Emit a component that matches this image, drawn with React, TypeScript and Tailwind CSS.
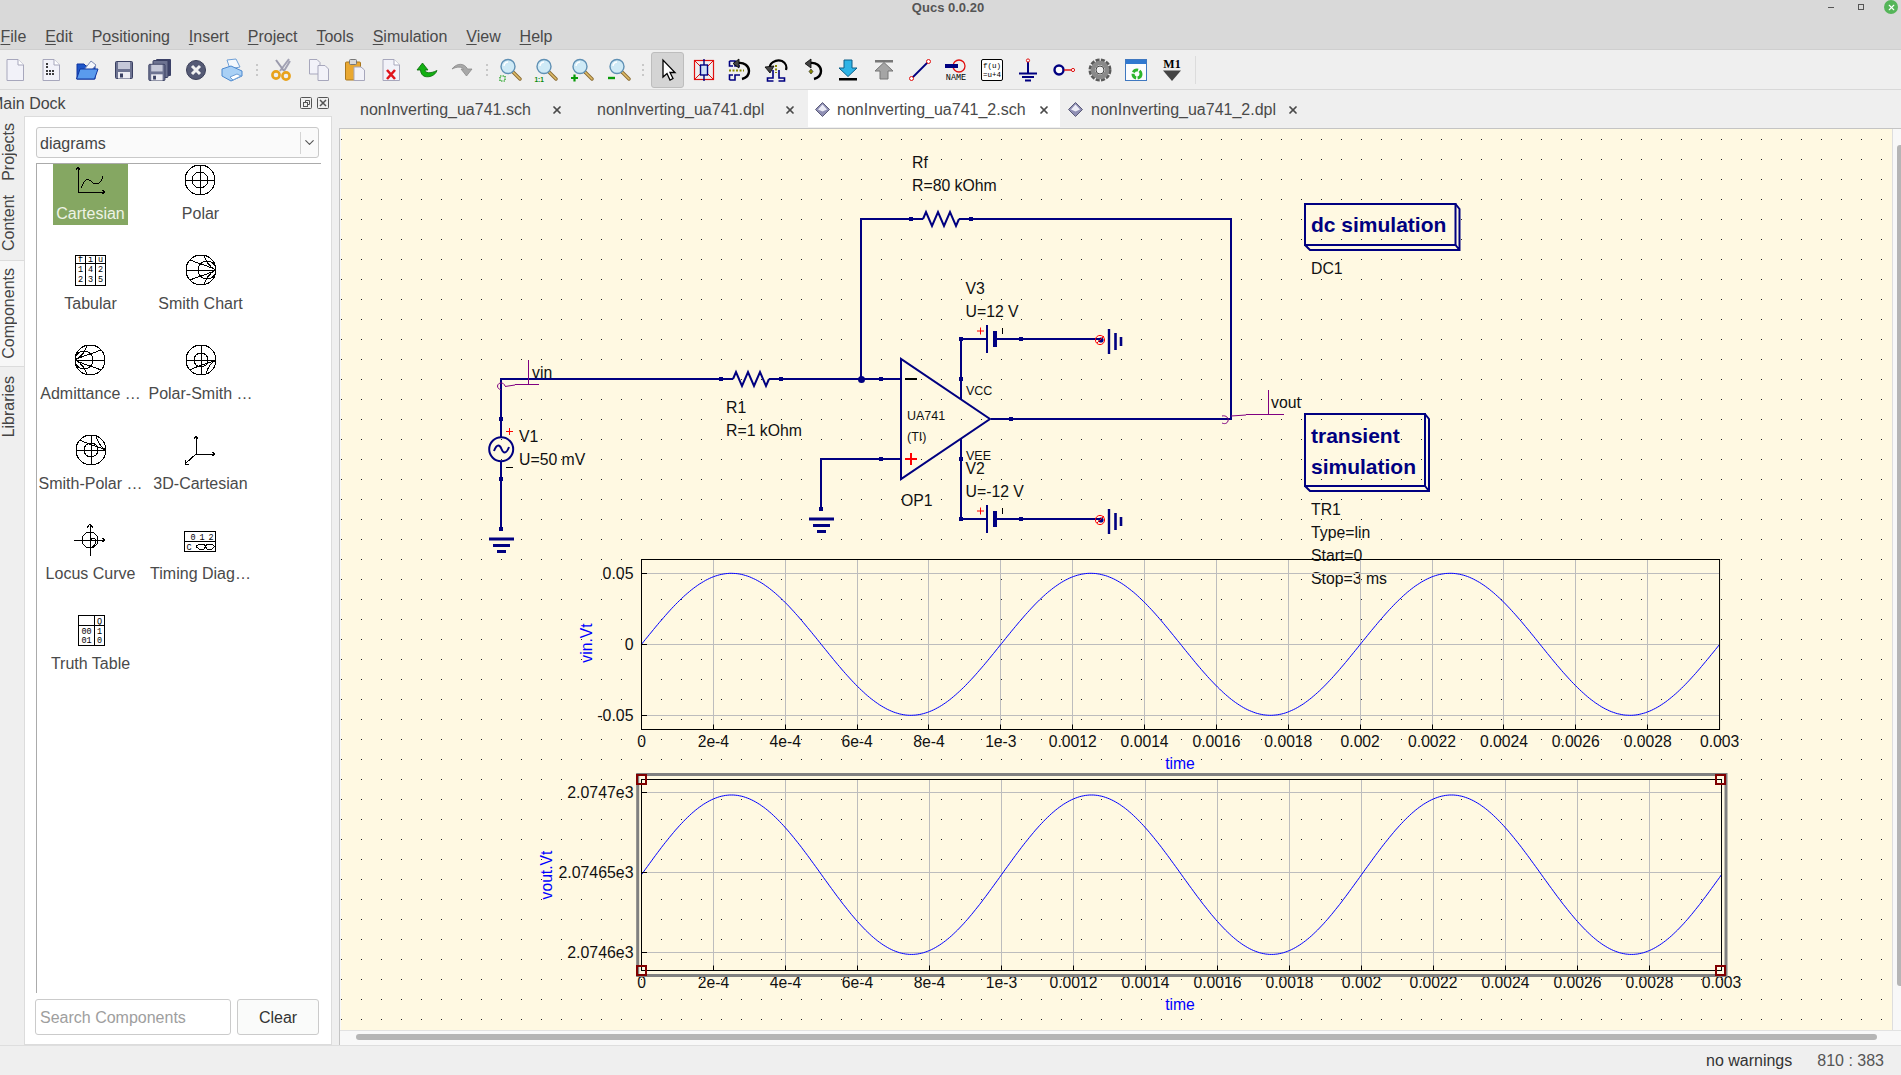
import React from 'react';
import { ChevronDown, X } from 'lucide-react';

const NAVY = '#000080';

const wave = (x0: number, x1: number, cy: number, amp: number, period: number) => {
  let d = '';
  for (let x = x0; x <= x1; x += 2) {
    const y = cy - amp * Math.sin(((x - x0) * 2 * Math.PI) / period);
    d += `${d ? 'L' : 'M'}${x.toFixed(1)} ${y.toFixed(1)}`;
  }
  return d;
};

const Ico: React.FC<{ children: React.ReactNode }> = ({ children }) => (
  <svg width="24" height="24" viewBox="0 0 24 24">
    {children}
  </svg>
);

const Page: React.FC<{ children?: React.ReactNode }> = ({ children }) => (
  <Ico>
    <path d="M4 1.5H15L20.5 7V22.5H4Z" fill="#f2f2f9" stroke="#a7a7bc" />
    <path d="M15 1.5V7H20.5" fill="#fff" stroke="#a7a7bc" />
    {children}
  </Ico>
);

const Floppy: React.FC<{ x?: number; y?: number; s?: number }> = ({ x = 0, y = 0, s = 1 }) => (
  <g transform={`translate(${x} ${y}) scale(${s})`}>
    <rect x="3.5" y="3.5" width="17" height="17" rx="1" fill="#6d7391" stroke="#3a4062" />
    <rect x="6" y="4" width="12" height="7" fill="#c5c8d8" />
    <rect x="6" y="14" width="12" height="6.5" fill="#ececf2" />
    <rect x="8" y="15.5" width="3" height="4" fill="#3a4062" />
  </g>
);

const Lens: React.FC<{ children: React.ReactNode }> = ({ children }) => (
  <Ico>
    <path d="M15 14L22 21" stroke="#8a6a30" strokeWidth="3.4" strokeLinecap="round" />
    <path d="M15 14L22 21" stroke="#e0bd6a" strokeWidth="1.6" strokeLinecap="round" />
    <circle cx="10" cy="8.5" r="7" fill="#cfeaf6" stroke="#5f90b4" strokeWidth="1.4" />
    <path d="M6 8a4.5 4.5 0 0 1 4-4" stroke="#fff" strokeWidth="1.4" fill="none" />
    {children}
  </Ico>
);

const BigArrow: React.FC<{ fill: string; edge: string; up?: boolean }> = ({ fill, edge, up }) => (
  <Ico>
    {up ? (
      <>
        <rect x="3" y="2" width="18" height="2.5" fill="#777" />
        <path d="M12 4.5L21 13H16V21H8V13H3Z" fill={fill} stroke={edge} />
      </>
    ) : (
      <>
        <path d="M8 2H16V10H21L12 18.5L3 10H8Z" fill={fill} stroke={edge} />
        <rect x="3" y="20" width="18" height="2.5" fill="#000" />
      </>
    )}
  </Ico>
);

const CurlArrow: React.FC = () => (
  <g>
    <path d="M10 5C16 4 21 8 21 13C21 17 18 20 14 21" fill="none" stroke="#000" strokeWidth="2.4" />
    <path d="M11 1L5 5.5L11 10Z" fill="#444" stroke="#000" strokeWidth="0.8" />
  </g>
);

const toolbarGroups: React.ReactNode[][] = [
  [
    <Page />,
    <Page>
      <path d="M7 6h2M7 9h3M7 13h8M7 16h9" stroke="#000" strokeWidth="1.3" strokeDasharray="2 1" />
    </Page>,
    <Ico>
      <path d="M2 6H9L11 8H20V21H2Z" fill="#1d55c8" stroke="#0f34a0" />
      <path d="M9 12L16 3L21 7L16 13Z" fill="#f4f6fb" stroke="#7d8cb5" />
      <path d="M1.5 21L5 11H23L19.5 21Z" fill="#5a9bee" stroke="#0f34a0" />
    </Ico>,
    <Ico>
      <Floppy />
    </Ico>,
    <Ico>
      <rect x="8" y="1" width="15" height="17" rx="1" fill="#3c4268" />
      <rect x="5" y="2.5" width="15" height="17" rx="1" fill="#6d7391" stroke="#3a4062" />
      <Floppy x={-2.5} y={3} s={0.95} />
    </Ico>,
    <Ico>
      <circle cx="12" cy="12" r="9.5" fill="#555a75" stroke="#3b3f58" />
      <path d="M8 8L16 16M16 8L8 16" stroke="#f2f2f2" strokeWidth="3" />
    </Ico>,
    <Ico>
      <path d="M7 2L16 1L20 9L10 11Z" fill="#f4f8fc" stroke="#6f9fd6" />
      <path d="M2 11L11 8L22 13V18L11 23L2 18Z" fill="#a9d0f5" stroke="#4a88cf" />
      <path d="M10 19L17 16L21 18L13 22Z" fill="#fff" stroke="#6f9fd6" />
    </Ico>,
  ],
  [
    <Ico>
      <path d="M10 13L19 1M14 13L20 3" stroke="#a2a2b4" strokeWidth="2" />
      <path d="M14 13L6 2" stroke="#9a9aac" strokeWidth="2" />
      <circle cx="6" cy="17" r="3.6" fill="none" stroke="#e8a21c" strokeWidth="2.6" />
      <circle cx="16" cy="18" r="3.6" fill="none" stroke="#e8a21c" strokeWidth="2.6" />
    </Ico>,
    <Ico>
      <path d="M2.5 1.5H10L13 4.5V16H2.5Z" fill="#f2f2f9" stroke="#a7a7bc" />
      <path d="M11 7.5H18L21.5 11V22.5H11Z" fill="#f2f2f9" stroke="#a7a7bc" />
    </Ico>,
    <Ico>
      <rect x="2.5" y="4" width="15" height="18" rx="1" fill="#e9a832" stroke="#a9761c" />
      <rect x="6.5" y="1.5" width="7" height="5" rx="1" fill="#d9d9d9" stroke="#777" />
      <path d="M11 9H18L21.5 12V22.5H11Z" fill="#f2f2f9" stroke="#a7a7bc" />
    </Ico>,
    <Page>
      <path d="M8 12L16 21M16 12L8 21" stroke="#e0141c" strokeWidth="2.6" />
    </Page>,
    <Ico>
      <path d="M2 12L7.5 5L13 12H10C10 15 15 16 22 12.5C20 18 14 19.5 10 18.5C7.5 18 5.5 15 5.5 12Z" fill="#12b012" stroke="#0a6a0a" strokeWidth="0.8" />
    </Ico>,
    <Ico>
      <path d="M1 11C6 4.5 13.5 5 16.5 11H21L15.5 18L10 11H12.5C10.5 8.5 6 8.5 1 11Z" fill="#a8a8a8" stroke="#8a8a8a" strokeWidth="0.8" />
    </Ico>,
  ],
  [
    <Lens>
      <rect x="2" y="18" width="5" height="5" fill="none" stroke="#0a9a0a" strokeWidth="1.2" strokeDasharray="1.5 1" />
    </Lens>,
    <Lens>
      <text x="0.5" y="23.5" fontSize="6.5" fontWeight="700" fill="#0a8a0a">
        1:1
      </text>
    </Lens>,
    <Lens>
      <path d="M1 20h7M4.5 16.5v7" stroke="#0a9a0a" strokeWidth="2.2" />
    </Lens>,
    <Lens>
      <path d="M1 20h7" stroke="#0a9a0a" strokeWidth="2.4" />
    </Lens>,
  ],
];

const dotWidths = ['w-[14px]', 'w-[10.5px]', 'w-[13px]'];

const toolbarTail: React.ReactNode[] = [
  <Ico>
    <rect x="2.5" y="2.5" width="19" height="19" fill="none" stroke="#e01010" strokeWidth="1.2" />
    <path d="M3 3L21 21M21 3L3 21" stroke="#e01010" />
    <rect x="8.5" y="7" width="7" height="10" fill="#cfe0f5" stroke="#000080" strokeWidth="1.4" />
    <path d="M12 1V7M12 17V23" stroke="#000080" strokeWidth="1.4" />
  </Ico>,
  <Ico>
    <path d="M1.5 3H7V8H12M1.5 3V8H5M1.5 22H7V17H12M1.5 22V17H5" fill="none" stroke={NAVY} strokeWidth="1.6" />
    <path d="M1 12.5H16" stroke="#8a8a00" strokeWidth="2" strokeDasharray="2 1.5" />
    <CurlArrow />
  </Ico>,
  <Ico>
    <path d="M12 7V15" stroke="#8a8a00" strokeWidth="2" strokeDasharray="2 1.5" />
    <path d="M9 12V20H3.5V23H9.5M15 12V20H20.5V23H14.5" fill="none" stroke={NAVY} strokeWidth="1.6" />
    <path d="M6 12C4 5 12 1 18 3C22 5 23 9 22 12" fill="none" stroke="#000" strokeWidth="2.2" />
    <path d="M1 9L6 15L10 8Z" fill="#444" stroke="#000" strokeWidth="0.8" />
  </Ico>,
  <Ico>
    <CurlArrow />
    <path d="M11 11L13 13.5L11 16L9 13.5Z" fill="#8a8a00" stroke="#222" strokeWidth="0.6" />
  </Ico>,
  <BigArrow fill="#2eb4e6" edge="#0b5f88" />,
  <BigArrow fill="#a5a5a5" edge="#777" up />,
  <Ico>
    <path d="M3.5 20.5L20.5 3.5" stroke={NAVY} strokeWidth="1.8" />
    <circle cx="3.5" cy="20.5" r="2" fill="#fff" stroke="#e01010" />
    <circle cx="20.5" cy="3.5" r="2" fill="#fff" stroke="#e01010" />
  </Ico>,
  <Ico>
    <circle cx="15" cy="8" r="6" fill="none" stroke="#e01010" strokeWidth="1.3" />
    <rect x="1" y="6" width="13" height="4" fill={NAVY} />
    <text x="12" y="22" fontSize="8.5" textAnchor="middle" fill="#000" fontFamily="Liberation Mono, monospace">
      NAME
    </text>
  </Ico>,
  <Ico>
    <rect x="1.5" y="1.5" width="21" height="21" rx="1.5" fill="#fff" stroke="#000" />
    <text x="12" y="10" fontSize="7.5" textAnchor="middle" fill="#000" fontFamily="Liberation Mono, monospace">
      f(u)
    </text>
    <text x="12" y="19" fontSize="7.5" textAnchor="middle" fill="#000" fontFamily="Liberation Mono, monospace">
      =u+4
    </text>
  </Ico>,
  <Ico>
    <path d="M12 4V15" stroke={NAVY} strokeWidth="2" />
    <circle cx="12" cy="2.5" r="1.6" fill="#fff" stroke="#e01010" />
    <path d="M3 15.5H21M6 19H18M9 22.5H15" stroke={NAVY} strokeWidth="2" />
  </Ico>,
  <Ico>
    <circle cx="7" cy="12" r="4.5" fill="#fff" stroke={NAVY} strokeWidth="2.4" />
    <path d="M12 12H20" stroke="#e01010" strokeWidth="1.4" />
    <circle cx="21" cy="12" r="1.6" fill="#fff" stroke="#e01010" />
  </Ico>,
  <Ico>
    <circle cx="12" cy="12" r="10" fill="none" stroke="#5a5a5a" strokeWidth="3" strokeDasharray="4 1.3" />
    <circle cx="12" cy="12" r="7" fill="none" stroke="#8a8a8a" strokeWidth="4.5" />
    <circle cx="12" cy="12" r="4" fill="#f0f0f0" stroke="#444" />
  </Ico>,
  <Ico>
    <rect x="1.5" y="1.5" width="21" height="21" fill="#fbfcfe" stroke="#3f78c0" />
    <rect x="2" y="2" width="20" height="4" fill="#2f78d0" />
    <circle cx="13" cy="16" r="4" fill="none" stroke="#2cb52c" strokeWidth="3" strokeDasharray="5.5 1.5" />
  </Ico>,
  <Ico>
    <text x="12" y="10" fontSize="12" fontWeight="700" textAnchor="middle" fill="#000" fontFamily="Liberation Serif, serif">
      M1
    </text>
    <path d="M3 12.5H21L12 23Z" fill="#444" />
  </Ico>,
];

const Smith: React.FC = () => (
  <>
    <circle cx="16" cy="16" r="15" />
    <path d="M1 16H31" />
    <circle cx="22" cy="16" r="9" />
    <path d="M31 16C24 13 20 6 19 1M31 16C24 19 20 26 19 31M31 16C24 12 12 9 5 6M31 16C24 20 12 23 5 26" />
  </>
);

const SmithHalf: React.FC<{ top?: boolean }> = ({ top }) => (
  <>
    <circle cx="16" cy="16" r="15" />
    <path d="M1 16H31M16 1V31" />
    <circle cx="16" cy="16" r="7" />
    {top ? (
      <path d="M31 16C24 12 22 6 21 2M31 16C24 13 12 10 5 6" />
    ) : (
      <path d="M31 16C24 20 22 26 21 30M31 16C24 19 12 22 5 26" />
    )}
  </>
);

const small = { fontSize: 8.5, fontFamily: 'Liberation Mono, monospace', fill: '#000', stroke: 'none', textAnchor: 'middle' as const };

const diagrams: { label: string; icon: React.ReactNode }[] = [
  {
    label: 'Cartesian',
    icon: (
      <>
        <path d="M3 3V28H30M1 6L3 3L5 6M27 26L30 28L27 30" />
        <path d="M6 24C10 14 13 14 17 18C21 22 26 20 28 12" />
      </>
    ),
  },
  {
    label: 'Polar',
    icon: (
      <>
        <circle cx="16" cy="16" r="15" />
        <circle cx="16" cy="16" r="8" />
        <path d="M1 16H31M16 1V31" />
      </>
    ),
  },
  {
    label: 'Tabular',
    icon: (
      <>
        <rect x="1.5" y="1.5" width="30" height="30" strokeWidth="1.4" />
        <path d="M1.5 9H31.5M11.5 1.5V31.5M21.5 1.5V31.5" />
        <text x="6.5" y="8" {...small}>f</text>
        <text x="16.5" y="8" {...small}>i</text>
        <text x="26.5" y="8" {...small}>u</text>
        <text x="6.5" y="18" {...small}>1</text>
        <text x="16.5" y="18" {...small}>4</text>
        <text x="26.5" y="18" {...small}>2</text>
        <text x="6.5" y="28" {...small}>2</text>
        <text x="16.5" y="28" {...small}>3</text>
        <text x="26.5" y="28" {...small}>5</text>
      </>
    ),
  },
  { label: 'Smith Chart', icon: <Smith /> },
  {
    label: 'Admittance …',
    icon: (
      <g transform="translate(32 0) scale(-1 1)">
        <Smith />
      </g>
    ),
  },
  { label: 'Polar-Smith …', icon: <SmithHalf /> },
  { label: 'Smith-Polar …', icon: <SmithHalf top /> },
  {
    label: '3D-Cartesian',
    icon: <path d="M12 2V20H31M10 5L12 2L14 5M28 18L31 20L28 22M12 20L1 30M1 26V30H5" />,
  },
  {
    label: 'Locus Curve',
    icon: (
      <>
        <circle cx="16" cy="16" r="8" />
        <path d="M0 16H31M16 0V32M13 4L16 0L19 4M28 14L31 16L28 18" />
        <path d="M16 16C24 10 24 22 16 24" />
      </>
    ),
  },
  {
    label: 'Timing Diag…',
    icon: (
      <>
        <rect x="0.5" y="7.5" width="31" height="20" strokeWidth="1.2" />
        <path d="M0.5 17.5H31.5M12 22.5L15 20H20L23 25H28L31 22M12 22.5L15 25H20L23 20H28L31 23" />
        <text x="9" y="15.5" {...small}>0</text>
        <text x="18" y="15.5" {...small}>1</text>
        <text x="27" y="15.5" {...small}>2</text>
        <text x="5" y="25.5" {...small}>C</text>
      </>
    ),
  },
  {
    label: 'Truth Table',
    icon: (
      <>
        <rect x="3.5" y="1.5" width="26" height="30" strokeWidth="1.2" />
        <path d="M3.5 11H29.5M19.5 1.5V31.5" />
        <text x="24.5" y="9.5" {...small}>Q</text>
        <text x="11.5" y="20" {...small}>00</text>
        <text x="24.5" y="20" {...small}>1</text>
        <text x="11.5" y="29" {...small}>01</text>
        <text x="24.5" y="29" {...small}>0</text>
      </>
    ),
  },
];

const menu = [
  ['', 'F', 'ile'],
  ['', 'E', 'dit'],
  ['P', 'o', 'sitioning'],
  ['', 'I', 'nsert'],
  ['', 'P', 'roject'],
  ['', 'T', 'ools'],
  ['', 'S', 'imulation'],
  ['', 'V', 'iew'],
  ['', 'H', 'elp'],
];

const Dots: React.FC<{ width: string }> = ({ width }) => (
  <div className={`${width} flex flex-col items-center gap-[3px]`}>
    <span className="w-[2px] h-[2px] bg-[#c8c8c8]" />
    <span className="w-[2px] h-[2px] bg-[#c8c8c8]" />
    <span className="w-[2px] h-[2px] bg-[#c8c8c8]" />
  </div>
);

const Diamond = () => (
  <svg width="15" height="15" viewBox="0 0 15 15">
    <path d="M7.5 .5L14.5 7.5L7.5 14.5L.5 7.5Z" fill="#8f8fb4" stroke="#5a5a78" />
    <path d="M7.5 2.5L12 7.5L7.5 9.5L3 7.5Z" fill="#ececf6" />
  </svg>
);

const Grounded: React.FC<{ x: number; y: number }> = ({ x, y }) => (
  <g stroke={NAVY} fill="none">
    <path d={`M${x - 12.5} ${y}H${x + 12.5}`} strokeWidth="3" />
    <path d={`M${x - 8.5} ${y + 6.5}H${x + 8.5}`} strokeWidth="3" />
    <path d={`M${x - 4.5} ${y + 12.5}H${x + 4.5}`} strokeWidth="3" />
  </g>
);

const Port: React.FC<{ x: number; y: number }> = ({ x, y }) => <rect x={x - 2} y={y - 2} width="4" height="4" fill={NAVY} />;

const Lbl: React.FC<{ x: number; y: number; size?: number; anchor?: 'start' | 'middle' | 'end'; fill?: string; bold?: boolean; children: React.ReactNode }> = ({
  x,
  y,
  size = 15.8,
  anchor = 'start',
  fill = '#111',
  bold,
  children,
}) => (
  <text x={x} y={y} fontSize={size} textAnchor={anchor} fill={fill} fontWeight={bold ? 700 : 400}>
    {children}
  </text>
);

const Supply: React.FC<{ y: number }> = ({ y }) => (
  <g>
    <path d={`M961 ${y}H987M996 ${y}H1100`} stroke={NAVY} strokeWidth="2" fill="none" />
    <path d={`M987 ${y - 14}V${y + 14}`} stroke={NAVY} strokeWidth="2" />
    <path d={`M995 ${y - 8}V${y + 8}`} stroke={NAVY} strokeWidth="4" />
    <path d={`M${977} ${y - 8}H${984}M${980.5} ${y - 11.5}V${y - 4.5}`} stroke="#f00" strokeWidth="1" />
    <path d={`M1002.5 ${y - 11}V${y - 5}`} stroke="#000" strokeWidth="1" />
    <Port x={961} y={y} />
    <Port x={1021} y={y} />
    <circle cx="1101" cy={y + 1} r="2.6" fill={NAVY} />
    <circle cx="1100" cy={y + 1} r="4.6" fill="none" stroke="#f00" />
    <path d={`M1097 ${y + 4}L1104 ${y - 3}`} stroke="#f00" />
    <path d={`M1109 ${y - 10}V${y + 15}`} stroke={NAVY} strokeWidth="2.4" />
    <path d={`M1115.5 ${y - 6}V${y + 11}`} stroke={NAVY} strokeWidth="2.6" />
    <path d={`M1121 ${y - 2}V${y + 7}`} stroke={NAVY} strokeWidth="2.6" />
  </g>
);

const SimBox: React.FC<{ top: number; right: number; bottom: number }> = ({ top, right, bottom }) => (
  <g fill="none" stroke={NAVY}>
    <rect x="1305" y={top} width={right - 1305} height={bottom - top} strokeWidth="2" />
    <path
      d={`M${right} ${top}L${right + 4} ${top + 5}V${bottom + 5}H1310L1305 ${bottom}M${right} ${bottom}L${right + 4} ${bottom + 5}`}
      strokeWidth="2"
    />
  </g>
);

const xLabels = ['0', '2e-4', '4e-4', '6e-4', '8e-4', '1e-3', '0.0012', '0.0014', '0.0016', '0.0018', '0.002', '0.0022', '0.0024', '0.0026', '0.0028', '0.003'];

const Plot: React.FC<{
  top: number;
  bottom: number;
  step: number;
  rows: { y: number; label: string }[];
  yName: string;
  yNameX: number;
  yNameY: number;
  curve: string;
  labelY: number;
  timeY: number;
}> = ({ top, bottom, step, rows, yName, yNameX, yNameY, curve, labelY, timeY }) => {
  const left = 641.5;
  const right = left + step * 15;
  return (
    <g>
      <g stroke="#bdbdbd" fill="none">
        {xLabels.slice(1, 15).map((_, i) => {
          const x = Math.floor(left + step * (i + 1)) + 0.5;
          return <path key={i} d={`M${x} ${top}V${bottom}`} />;
        })}
        {rows.map((r) => (
          <path key={r.label} d={`M${left} ${r.y}H${right}`} />
        ))}
      </g>
      <path d={curve} fill="none" stroke="#0000ff" />
      <rect x={left} y={top} width={right - left} height={bottom - top} fill="none" stroke="#000" />
      <g stroke="#000" fill="none">
        {xLabels.slice(1, 15).map((_, i) => {
          const x = Math.floor(left + step * (i + 1)) + 0.5;
          return <path key={i} d={`M${x} ${bottom}v-5`} />;
        })}
        {rows.map((r) => (
          <path key={r.label} d={`M${left} ${r.y}h5.5`} />
        ))}
      </g>
      {rows.map((r) => (
        <Lbl key={r.label} x={633.5} y={r.y + 5.3} anchor="end" size={15.9}>
          {r.label}
        </Lbl>
      ))}
      {xLabels.map((t, i) => (
        <Lbl key={t} x={left + step * i} y={labelY} anchor="middle" size={15.7}>
          {t}
        </Lbl>
      ))}
      <text x={yNameX} y={yNameY} fontSize="15.7" textAnchor="middle" fill="#0000ff" transform={`rotate(-90 ${yNameX} ${yNameY})`}>
        {yName}
      </text>
      <Lbl x={1180} y={timeY} anchor="middle" size={15.7} fill="#0000ff">
        time
      </Lbl>
    </g>
  );
};

const Schematic = () => (
  <svg width="1551" height="901" viewBox="341 129 1551 901" className="block">
    <defs>
      <pattern id="dots" x="0" y="0" width="20" height="20" patternUnits="userSpaceOnUse">
        <rect x="1" y="19" width="1" height="1" fill="#222" />
      </pattern>
    </defs>
    <rect x="341" y="129" width="1551" height="901" fill="url(#dots)" />

    {/* wires */}
    <path
      d="M501 419V379H733M769 379H901M861 379V219H923M959 219H1231V419H991M821 509V459H901M501 419V437M501 461V529"
      fill="none"
      stroke={NAVY}
      strokeWidth="2"
    />
    <path d="M961 399V339M961 439V519" fill="none" stroke={NAVY} strokeWidth="2" />
    <path d="M733 379L736 372L742 386L748 372L754 386L760 372L766 386L769 379" fill="none" stroke={NAVY} strokeWidth="2" />
    <path d="M923 219L926 212L932 226L938 212L944 226L950 212L956 226L959 219" fill="none" stroke={NAVY} strokeWidth="2" />
    {[
      [721, 379],
      [781, 379],
      [881, 379],
      [881, 459],
      [821, 509],
      [911, 219],
      [971, 219],
      [961, 379],
      [961, 459],
      [1011, 419],
      [501, 419],
      [501, 479],
      [501, 529],
    ].map(([x, y]) => (
      <Port key={`${x}-${y}`} x={x} y={y} />
    ))}
    <circle cx="861.5" cy="379.5" r="3.5" fill={NAVY} />

    {/* source and grounds */}
    <circle cx="501.2" cy="449.3" r="12" fill="none" stroke={NAVY} strokeWidth="2" />
    <path d="M494 451C497 443 500 445 501.5 449C503 453 506 455 509 447" fill="none" stroke={NAVY} strokeWidth="2" />
    <path d="M506 431.5H513M509.5 428V435" stroke="#f00" strokeWidth="1" />
    <path d="M506 467.5H513" stroke="#000" strokeWidth="1" />
    <Grounded x={501.5} y={539} />
    <Grounded x={821.5} y={519} />

    {/* op amp */}
    <path d="M901 359V479L990 419Z" fill="none" stroke={NAVY} strokeWidth="2" />
    <path d="M905 379H917" stroke="#000" strokeWidth="2" />
    <path d="M905 459H917M911 453V465" stroke="#f00" strokeWidth="2" />
    <Lbl x={907} y={420} size={12.5}>UA741</Lbl>
    <Lbl x={907} y={441} size={12.5}>(TI)</Lbl>
    <Lbl x={966} y={395} size={12.5}>VCC</Lbl>
    <Lbl x={966} y={460} size={12.5}>VEE</Lbl>

    <Supply y={339} />
    <Supply y={519} />

    {/* node labels */}
    <g stroke="#800080" fill="none">
      <path d="M528.5 360V384.5M515 384.5H539M515 385L505 386.5" />
      <path d="M505 386C504 382 498 382 497.5 386C497.5 388 499 389.5 501 389.5" />
      <path d="M1268.5 390V414.5M1246 414.5H1284M1246 415L1231 416" />
      <path d="M1222 416C1226 415 1229 418 1228 421C1227 424 1224 424 1222 423" />
    </g>
    <Lbl x={532} y={378}>vin</Lbl>
    <Lbl x={1271} y={408}>vout</Lbl>

    <Lbl x={912} y={168}>Rf</Lbl>
    <Lbl x={912} y={191}>R=80 kOhm</Lbl>
    <Lbl x={726} y={413}>R1</Lbl>
    <Lbl x={726} y={436}>R=1 kOhm</Lbl>
    <Lbl x={519} y={442}>V1</Lbl>
    <Lbl x={519} y={465}>U=50 mV</Lbl>
    <Lbl x={901} y={506}>OP1</Lbl>
    <Lbl x={965.5} y={294}>V3</Lbl>
    <Lbl x={965.5} y={317}>U=12 V</Lbl>
    <Lbl x={965.5} y={474}>V2</Lbl>
    <Lbl x={965.5} y={497}>U=-12 V</Lbl>

    {/* simulation blocks */}
    <SimBox top={204} right={1455.5} bottom={245} />
    <Lbl x={1311} y={232} size={21} bold fill={NAVY}>dc simulation</Lbl>
    <Lbl x={1311} y={274}>DC1</Lbl>
    <SimBox top={414} right={1425} bottom={486} />
    <Lbl x={1311} y={443} size={21} bold fill={NAVY}>transient</Lbl>
    <Lbl x={1311} y={474} size={21} bold fill={NAVY}>simulation</Lbl>
    <Lbl x={1311} y={515}>TR1</Lbl>
    <Lbl x={1311} y={538}>Type=lin</Lbl>
    <Lbl x={1311} y={561}>Start=0</Lbl>
    <Lbl x={1311} y={584}>Stop=3 ms</Lbl>

    {/* diagrams */}
    <Plot
      top={559.5}
      bottom={729.5}
      step={71.87}
      rows={[
        { y: 573.5, label: '0.05' },
        { y: 644.5, label: '0' },
        { y: 715.5, label: '-0.05' },
      ]}
      yName="vin.Vt"
      yNameX={591.5}
      yNameY={643}
      curve={wave(641.5, 1719.5, 644.3, 71, 359.4)}
      labelY={746.5}
      timeY={769}
    />
    <Plot
      top={779.5}
      bottom={970.5}
      step={72}
      rows={[
        { y: 792.5, label: '2.0747e3' },
        { y: 872.5, label: '2.07465e3' },
        { y: 952.5, label: '2.0746e3' },
      ]}
      yName="vout.Vt"
      yNameX={552}
      yNameY={875}
      curve={wave(641.5, 1721.5, 874.7, 79.7, 360)}
      labelY={988}
      timeY={1010}
    />
    <rect x="637.7" y="774.5" width="1088.3" height="201" fill="none" stroke="#808080" strokeWidth="3" />
    <g fill="none" stroke="#800000" strokeWidth="2">
      <rect x="637" y="775" width="9" height="9" />
      <rect x="637" y="966" width="9" height="9" />
      <rect x="1716" y="775" width="9" height="9" />
      <rect x="1716" y="966" width="9" height="9" />
    </g>
  </svg>
);

const App: React.FC = () => {
  return (
    <div className="w-[1901px] h-[1075px] overflow-hidden flex flex-col bg-[#efefef] text-[16px] text-[#444] font-['Liberation_Sans',sans-serif]">
      {/* title and menu */}
      <div className="h-[50px] shrink-0 bg-[#d9d9d9] border-b border-[#cfcfcf]">
        <div className="h-[22px] flex items-start">
          <div className="flex-1" />
          <span className="mr-[5px] text-[13px] leading-[15px] font-bold text-[#555]">Qucs 0.0.20</span>
          <div className="flex-1 flex justify-end items-center gap-[10px] h-[14px]">
            <span className="w-5 flex justify-center">
              <span className="w-[6px] h-[1px] bg-[#555]" />
            </span>
            <span className="w-5 flex justify-center">
              <span className="w-[6px] h-[6px] border border-[#555]" />
            </span>
            <span className="w-5 flex justify-center">
              <span className="w-[14px] h-[14px] rounded-full bg-[#55b559] flex items-center justify-center">
                <X size={9} strokeWidth={3} color="#fff" />
              </span>
            </span>
          </div>
        </div>
        <div className="h-[27px] flex items-center gap-[18.9px] pl-[0.5px] pt-[2px] text-[#4a4a4a]">
          {menu.map(([a, b, c]) => (
            <span key={a + b + c}>
              {a}
              <span className="underline underline-offset-2">{b}</span>
              {c}
            </span>
          ))}
        </div>
      </div>

      {/* toolbar */}
      <div className="h-[40px] shrink-0 flex items-center border-b border-[#d8d8d8] -ml-[3px]">
        {toolbarGroups.map((group, g) => (
          <React.Fragment key={g}>
            {group.map((icon, i) => (
              <span key={i} className="w-[36.2px] h-9 flex items-center justify-center">
                {icon}
              </span>
            ))}
            <Dots width={dotWidths[g]} />
          </React.Fragment>
        ))}
        <span className="w-[33px] h-9 mx-[1.5px] flex items-center justify-center bg-[#d4d4d4] border border-[#bdbdbd] rounded-[3px]">
          <Ico>
            <path d="M7 2V19L11 15.5L14 22L17 20.5L14 14.5H19Z" fill="#fff" stroke="#000" strokeWidth="1.3" />
          </Ico>
        </span>
        {toolbarTail.map((icon, i) => (
          <span key={i} className="w-9 h-9 flex items-center justify-center">
            {icon}
          </span>
        ))}
        <span className="ml-[5px] w-[1px] h-[28px] bg-[#dcdcdc]" />
      </div>

      <div className="flex-1 flex min-h-0">
        {/* dock */}
        <div className="w-[332px] shrink-0 flex flex-col">
          <div className="h-[26px] flex items-center justify-between pr-[2px]">
            <span className="-ml-[10px] pt-[2px]">Main Dock</span>
            <div className="flex items-center gap-[5px] pr-[1px]">
              <svg width="12" height="12" viewBox="0 0 12 12" fill="none" stroke="#555">
                <rect x=".5" y=".5" width="11" height="11" rx="1" />
                <rect x="3.5" y="5.5" width="4" height="4" />
                <path d="M5.5 5.5V3.5H9.5V7.5H7.5" />
              </svg>
              <svg width="12" height="12" viewBox="0 0 12 12" fill="none" stroke="#555">
                <rect x=".5" y=".5" width="11" height="11" rx="1" />
                <path d="M3 3L9 9M9 3L3 9" strokeWidth="1.5" />
              </svg>
            </div>
          </div>
          <div className="flex-1 flex min-h-0">
            <div className="w-[24px] shrink-0 flex flex-col">
              <div className="h-[71px] flex items-center justify-center pr-[7px]">
                <span className="[writing-mode:vertical-rl] rotate-180 leading-[16px]">Projects</span>
              </div>
              <div className="h-[74px] flex items-center justify-center pr-[7px] border-b border-[#dcdcdc]">
                <span className="[writing-mode:vertical-rl] rotate-180 leading-[16px]">Content</span>
              </div>
              <div className="h-[106px] flex items-center justify-center pr-[7px] bg-[#f7f7f7] border-b border-[#dcdcdc]">
                <span className="[writing-mode:vertical-rl] rotate-180 leading-[16px]">Components</span>
              </div>
              <div className="h-[79px] flex items-center justify-center pr-[7px]">
                <span className="[writing-mode:vertical-rl] rotate-180 leading-[16px]">Libraries</span>
              </div>
            </div>
            <div className="flex-1 min-w-0 bg-white border border-[#dcdcdc] pt-[10px] pl-[11px] pr-[12px] pb-[9px] flex flex-col">
              <div className="h-[31px] shrink-0 border border-[#c9c9c9] rounded-[3px] bg-[#fafafa] flex items-center justify-between pl-[3px]">
                <span className="pt-[2px]">diagrams</span>
                <span className="w-[18px] h-[22px] border-l border-[#d4d4d4] flex items-center justify-center">
                  <ChevronDown size={15} strokeWidth={1.8} color="#555" />
                </span>
              </div>
              <div className="flex-1 min-h-0 mt-[5px] -mr-[2px] border-l border-t border-[#ababab] mb-[6px]">
                <div className="grid grid-cols-[107px_113px] auto-rows-[90px]">
                  {diagrams.map((d, i) => (
                    <div key={d.label} className="flex justify-center">
                      <div className={i === 0 ? 'w-[75px] h-[61px] bg-[#85a762] text-[#eef3e6] flex flex-col items-center' : 'flex flex-col items-center'}>
                        <svg width="32" height="32" viewBox="0 0 32 32" fill="none" stroke="#000" shapeRendering="crispEdges" className="shrink-0">
                          {d.icon}
                        </svg>
                        <span className={`mt-[9px] leading-[18px] whitespace-nowrap ${i === 0 ? '' : 'text-[#4a4a4a]'}`}>{d.label}</span>
                      </div>
                    </div>
                  ))}
                </div>
              </div>
              <div className="h-[36px] shrink-0 flex gap-[6px] -ml-[1px]">
                <input
                  placeholder="Search Components"
                  className="w-[196px] border border-[#cbcbcb] rounded-[3px] bg-white px-[4px] pt-[2px] outline-none placeholder:text-[#9e9e9e]"
                />
                <button className="w-[83px] border border-[#cbcbcb] rounded-[3px] bg-[#fafbfa] text-[#333] pt-[2px]">Clear</button>
              </div>
            </div>
          </div>
        </div>

        {/* splitter gap */}
        <div className="w-[7px] shrink-0" />

        {/* tabs and schematic */}
        <div className="flex-1 min-w-0 flex flex-col">
          <div className="h-[38px] shrink-0 flex items-start pl-[2px]">
            <div className="w-[237px] h-[37px] flex items-center pl-[19px] pt-[2px] text-[#4a4a4a]">
              <span>nonInverting_ua741.sch</span>
              <X size={12} strokeWidth={3.4} className="ml-[20px]" />
            </div>
            <div className="w-[230px] h-[37px] flex items-center pl-[19px] pt-[2px] text-[#4a4a4a]">
              <span>nonInverting_ua741.dpl</span>
              <X size={12} strokeWidth={3.4} className="ml-[20px]" />
            </div>
            <div className="w-[252px] h-[37px] flex items-center pl-[7px] pt-[2px] bg-white text-[#4a4a4a]">
              <Diamond />
              <span className="ml-[7px]">nonInverting_ua741_2.sch</span>
              <X size={12} strokeWidth={3.4} className="ml-[12px]" />
            </div>
            <div className="w-[250px] h-[37px] flex items-center pl-[8px] pt-[2px] text-[#4a4a4a]">
              <Diamond />
              <span className="ml-[8px]">nonInverting_ua741_2.dpl</span>
              <X size={12} strokeWidth={3.4} className="ml-[11px]" />
            </div>
          </div>
          <div className="flex-1 min-h-0 border-t border-l border-[#c4c4c4] flex flex-col bg-[#f8f8f8]">
            <div className="flex min-h-0">
              <div className="w-[1551px] h-[901px] shrink-0 bg-[#fff9e2] ml-[1px]">
                <Schematic />
              </div>
              <div className="flex-1 border-l border-[#dedede] pl-[4px] pt-[16px]">
                <div className="w-full h-[841px] bg-[#b5b5b5] rounded-l-[3px]" />
              </div>
            </div>
            <div className="h-[15px] border-t border-[#e2e2e2] pt-[3px] pl-[16px]">
              <div className="w-[1521px] h-[6px] bg-[#b5b5b5] rounded-[3px]" />
            </div>
          </div>
        </div>
      </div>

      {/* status bar */}
      <div className="h-[30px] shrink-0 border-t border-[#dedede] flex items-center justify-end pr-[17px] text-[#333]">
        <span>no warnings</span>
        <span className="ml-[25px] text-[#555]">810 : 383</span>
      </div>
    </div>
  );
};

export default App;
